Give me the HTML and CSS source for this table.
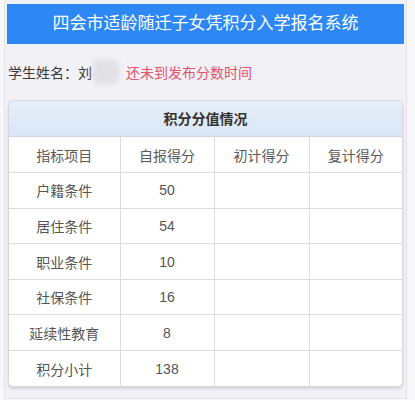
FILE: index.html
```html
<!DOCTYPE html>
<html lang="zh-CN">
<head>
<meta charset="utf-8">
<link rel="stylesheet" href="styles.css">
</head>
<body>
<div class="frame">
  <div class="topbar">四会市适龄随迁子女凭积分入学报名系统</div>
  <div class="student">
    <span class="label">学生姓名：刘</span><span class="blur"></span><span class="notice">还未到发布分数时间</span>
  </div>
  <div class="panel">
    <div class="panel-head">积分分值情况</div>
    <table class="scores">
      <colgroup>
        <col class="c1"><col class="c2"><col class="c3"><col class="c4">
      </colgroup>
      <tr class="head"><td>指标项目</td><td>自报得分</td><td>初计得分</td><td>复计得分</td></tr>
      <tr><td>户籍条件</td><td>50</td><td></td><td></td></tr>
      <tr><td>居住条件</td><td>54</td><td></td><td></td></tr>
      <tr><td>职业条件</td><td>10</td><td></td><td></td></tr>
      <tr><td>社保条件</td><td>16</td><td></td><td></td></tr>
      <tr><td>延续性教育</td><td>8</td><td></td><td></td></tr>
      <tr><td>积分小计</td><td>138</td><td></td><td></td></tr>
    </table>
  </div>
</div>
</body>
</html>
```
FILE: styles.css
```css
* { box-sizing: border-box; }
html, body { margin: 0; padding: 0; }
body {
  background: #f8f8fb;
  font-family: "Liberation Sans", "Noto Sans CJK SC", sans-serif;
  width: 415px;
  height: 400px;
  overflow: hidden;
}
.frame {
  margin-left: 4px;
  width: 403px;
  height: 399px;
  background: #f1f1f6;
  border: 1px solid #e3e3ea;
  border-top: none;
  padding: 4px 2px 0 2px;
}
.topbar {
  height: 40px;
  background: #2d88f6;
  color: #ffffff;
  font-size: 17px;
  line-height: 40px;
  text-align: center;
}
.student {
  display: flex;
  align-items: center;
  height: 56px;
  padding-left: 1px;
  font-size: 14px;
  color: #3a3a3a;
}
.blur {
  display: inline-block;
  width: 26px;
  height: 24px;
  margin-left: 1px;
  background: #e0e0e5;
  border-radius: 6px;
  filter: blur(2.5px);
}
.notice {
  margin-left: 7px;
  color: #e4526c;
}
.panel {
  margin: 0 1px;
  background: #ffffff;
  border: 1px solid #d6d6dc;
  border-radius: 5px;
  box-shadow: 0 2px 3px rgba(0, 0, 0, 0.12);
  overflow: hidden;
}
.panel-head {
  height: 36px;
  line-height: 36px;
  text-align: center;
  font-size: 14px;
  font-weight: bold;
  color: #333;
  background: linear-gradient(#e6eefa, #dbe7f6);
  border-bottom: 1px solid #cfd6e0;
}
.scores {
  width: 100%;
  border-collapse: collapse;
  table-layout: fixed;
  font-size: 14px;
  color: #555;
}
.c1 { width: 111px; }
.c2 { width: 94px; }
.c3 { width: 95px; }
.scores tr { height: 35.6px; }
.scores td {
  border: 1px solid #dcdcdf;
  text-align: center;
  padding: 0;
}
.scores tr:first-child td { border-top: none; }
.scores tr:last-child td { border-bottom: none; }
.scores td:first-child { border-left: none; }
.scores td:last-child { border-right: none; }
.scores tr.head td { color: #5a5a5a; }
```
